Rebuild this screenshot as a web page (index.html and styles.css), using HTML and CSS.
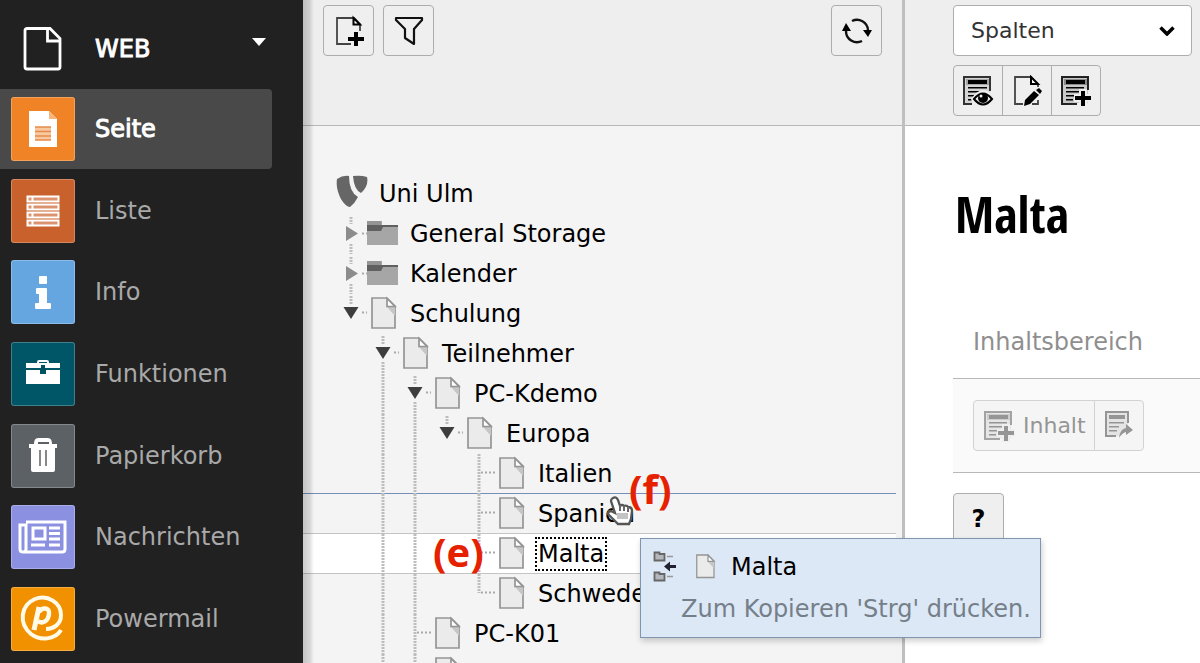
FILE: index.html
```html
<!DOCTYPE html>
<html lang="de">
<head>
<meta charset="utf-8">
<meta name="viewport" content="width=device-width, initial-scale=1">
<title>Malta – Seite</title>
<link rel="stylesheet" href="styles.css">
</head>
<body>
<svg class="sprite" aria-hidden="true">
  <symbol id="doc" viewBox="0 0 32 40">
    <path d="M5 4h15l8 8V34H5z" fill="#ebebeb" stroke="#959595" stroke-width="1.700"/>
    <path d="M19 12l9 10V12z" fill="#c6c6c6"/>
    <path d="M20 4.500v8h8z" fill="#fff" stroke="#959595" stroke-width="1.700"/>
  </symbol>
  <symbol id="folder" viewBox="0 0 32 40">
    <path d="M0 7h15v4h16v20H0z" fill="#a6a6a6"/>
    <path d="M0 11h31v2H16l-2 4H0z" fill="#606060"/>
    <path d="M0 7h14v4H0z" fill="#959595"/>
  </symbol>
  <symbol id="g-line" viewBox="0 0 32 40">
    <path d="M16 0v40" class="dots"/>
  </symbol>
  <symbol id="g-tee" viewBox="0 0 32 40">
    <path d="M16 0v40" class="dots"/><path d="M18 18.500h14" class="dots-h"/>
  </symbol>
  <symbol id="g-end" viewBox="0 0 32 40">
    <path d="M16 0v19" class="dots"/><path d="M18 18.500h14" class="dots-h"/>
  </symbol>
  <symbol id="g-closed" viewBox="0 0 32 40">
    <path d="M16 3v7M16 30v10" class="dots"/><path d="M27 19.500h6" class="dots-h"/>
    <path d="M11 12l12 7.500L11 27z" fill="#8c8c8c"/>
  </symbol>
  <symbol id="g-open" viewBox="0 0 32 40">
    <path d="M16 2v8" class="dots"/><path d="M27 18.500h6" class="dots-h"/>
    <path d="M8.500 13h15L16 25z" fill="#3d3d3d"/>
  </symbol>
  <symbol id="g-open-more" viewBox="0 0 32 40">
    <path d="M16 2v8M16 28v12" class="dots"/><path d="M27 18.500h6" class="dots-h"/>
    <path d="M8.500 13h15L16 25z" fill="#3d3d3d"/>
  </symbol>
  <symbol id="content-add" viewBox="0 0 32 32">
    <path d="M2 2h26v26H2z" fill="currentColor" fill-opacity=".16"/>
    <path d="M4 4h23v6H4z" fill="currentColor" fill-opacity=".3"/>
    <path d="M17 29H2V2h26v13" fill="none" stroke="currentColor" stroke-opacity=".85" stroke-width="2"/>
    <path d="M6 5h19v4H6zM6 12h18v1.500H6zM6 16h14v1.500H6zM6 20h9v1.500H6zM6 24h7v1.500H6z" fill="currentColor"/>
    <path d="M19 14h8v5h5v8h-5v5h-8v-5h-5v-8h5z" fill="#efefef"/>
    <path d="M21 16h4v5h6v4h-6v6h-4v-6h-6v-4h6z" fill="currentColor"/>
  </symbol>
</svg>

<div class="app">
  <nav class="sidebar" aria-label="Module">
    <button class="group" type="button">
      <svg class="group-icon" viewBox="0 0 40 46"><path d="M4 2.500h23l10 10V41a2 2 0 0 1-2 2H4a2 2 0 0 1-2-2V4.500a2 2 0 0 1 2-2zM24.500 3v12H37" fill="none" stroke="#fff" stroke-width="2.800"/></svg>
      <span class="group-label">WEB</span>
      <svg class="caret" viewBox="0 0 14 8"><path d="M0 0h14L7 8z" fill="#fff"/></svg>
    </button>
    <ul class="modules">
      <li><a class="module active" href="#seite"><span class="tile page"><svg viewBox="0 0 64 64"><path d="M18 14h20l8 8v28H18z" fill="#fff"/><path d="M38 14v8h8z" fill="#f6b57d"/><path d="M24 30h16v13H24z" fill="#f8c9a0"/><path d="M24 30h16M24 34.500h16M24 39h16M24 43h16" stroke="#e58a48" stroke-width="1.500"/></svg></span>Seite</a></li>
      <li><a class="module" href="#liste"><span class="tile list"><svg viewBox="0 0 64 64"><g fill="#dc9470" stroke="#fff" stroke-width="2"><path d="M16.500 17.500h31v5h-31zM16.500 25.500h31v5h-31zM16.500 33.500h31v5h-31zM16.500 41.500h31v5h-31z"/><path d="M21.500 17v30" stroke-dasharray="6 2"/></g></svg></span>Liste</a></li>
      <li><a class="module" href="#info"><span class="tile info"><svg viewBox="0 0 64 64"><path d="M29 16h6q1 0 1 1v6q0 1-1 1h-6q-1 0-1-1v-6q0-1 1-1zM26 28h9q1 0 1 1v14h3q1 0 1 1v4q0 1-1 1H25q-1 0-1-1v-4q0-1 1-1h3V34h-2q-1 0-1-1v-4q0-1 1-1z" fill="#fff"/></svg></span>Info</a></li>
      <li><a class="module" href="#funktionen"><span class="tile func"><svg viewBox="0 0 64 64"><path d="M15 21h11v-1q0-2 2-2h8q2 0 2 2v1h11v5H15zM28 21h8v-1h-8zM15 28h14v4h6v-4h14v14H15z" fill="#fff" fill-rule="evenodd"/><path d="M30 23h4v8h-4z" fill="#00505d"/></svg></span>Funktionen</a></li>
      <li><a class="module" href="#papierkorb"><span class="tile bin"><svg viewBox="0 0 64 64"><path d="M18 20h5q0-6 4-6h10q4 0 4 6h5v4h-2v22q0 2-2 2H22q-2 0-2-2V24h-2zM27 20h11v-2H27z" fill="#fff" fill-rule="evenodd"/><path d="M29 26v16M35 26v16" stroke="#888" stroke-width="2"/></svg></span>Papierkorb</a></li>
      <li><a class="module" href="#nachrichten"><span class="tile news"><svg viewBox="0 0 64 64"><g fill="none" stroke="#fff" stroke-width="3"><path d="M15 17h39v27q0 3-3 3H12q-3 0-3-3V20h6v24q0 3-3 3"/><path d="M22 23h12v11H22zM38 23h11M38 28.500h11M38 34h11M20 40h14M38 40h11"/></g></svg></span>Nachrichten</a></li>
      <li><a class="module" href="#powermail"><span class="tile mail"><svg viewBox="0 0 64 64"><g fill="none" stroke="#fffbe8" stroke-width="4"><path d="M50 43C44 53 29 54 20 47 7 36 10 18 24 12c13-5 26 4 26 16 0 9-7 14-15 14"/><path d="M28 20l-5 23" stroke-width="5"/><path d="M28 25c3-5 11-5 10 2-1 8-7 10-11 7" stroke-width="4.500"/></g></svg></span>Powermail</a></li>
    </ul>
  </nav>

  <section class="tree-panel" aria-label="Seitenbaum">
    <header class="bar tree-bar">
      <button class="btn square" type="button" aria-label="Neue Seite"><svg viewBox="0 0 32 32"><path d="M18 29H4V3h17l6 6v7" fill="none" stroke="#444" stroke-width="1.800"/><path d="M20.500 3v6.500H27z" fill="#fff" stroke="#000" stroke-width="2"/><path d="M21 17h4v5h6v4h-6v5h-4v-5h-6v-4h6z"/></svg></button>
      <button class="btn square" type="button" aria-label="Filter"><svg viewBox="0 0 32 32"><path d="M3 3h26v2l-8 9v15l-9-6v-9L3 5z" fill="none" stroke="#111" stroke-width="2.200" stroke-linejoin="round"/></svg></button>
      <button class="btn square push" type="button" aria-label="Aktualisieren"><svg viewBox="0 0 32 32"><path d="M11 6a11 11 0 0 1 16 9M21 26A11 11 0 0 1 5 16" fill="none" stroke="#111" stroke-width="2.400"/><path d="M22 15h9l-4 7zM1 16h9L5 8z"/></svg></button>
    </header>
    <ul class="tree">
      <li class="row root"><svg class="cell" viewBox="0 0 32 40"><path d="M1 5q6-4 12-3 0 16 9 21-3 6-8 10C7 32-1 17 1 5z" fill="#666"/><path d="M17 2q8-1 14 1 2 9-6 16-7-3-8-17z" fill="#666"/></svg><a class="name" href="#p1">Uni Ulm</a></li>
      <li class="row"><svg class="cell"><use href="#g-closed"/></svg><svg class="cell"><use href="#folder"/></svg><a class="name" href="#p2">General Storage</a></li>
      <li class="row"><svg class="cell"><use href="#g-closed"/></svg><svg class="cell"><use href="#folder"/></svg><a class="name" href="#p3">Kalender</a></li>
      <li class="row"><svg class="cell"><use href="#g-open"/></svg><svg class="cell"><use href="#doc"/></svg><a class="name" href="#p4">Schulung</a></li>
      <li class="row"><span class="cell"></span><svg class="cell"><use href="#g-open-more"/></svg><svg class="cell"><use href="#doc"/></svg><a class="name" href="#p5">Teilnehmer</a></li>
      <li class="row"><span class="cell"></span><svg class="cell"><use href="#g-line"/></svg><svg class="cell"><use href="#g-open-more"/></svg><svg class="cell"><use href="#doc"/></svg><a class="name" href="#p6">PC-Kdemo</a></li>
      <li class="row"><span class="cell"></span><svg class="cell"><use href="#g-line"/></svg><svg class="cell"><use href="#g-line"/></svg><svg class="cell"><use href="#g-open"/></svg><svg class="cell"><use href="#doc"/></svg><a class="name" href="#p7">Europa</a></li>
      <li class="row"><span class="cell"></span><svg class="cell"><use href="#g-line"/></svg><svg class="cell"><use href="#g-line"/></svg><span class="cell"></span><svg class="cell"><use href="#g-tee"/></svg><svg class="cell"><use href="#doc"/></svg><a class="name" href="#p8">Italien</a></li>
      <li class="row drop"><span class="cell"></span><svg class="cell"><use href="#g-line"/></svg><svg class="cell"><use href="#g-line"/></svg><span class="cell"></span><svg class="cell"><use href="#g-tee"/></svg><svg class="cell"><use href="#doc"/></svg><a class="name" href="#p9">Spanien</a></li>
      <li class="row selected"><span class="cell"></span><svg class="cell"><use href="#g-line"/></svg><svg class="cell"><use href="#g-line"/></svg><span class="cell"></span><svg class="cell"><use href="#g-tee"/></svg><svg class="cell"><use href="#doc"/></svg><a class="name" href="#p10">Malta</a></li>
      <li class="row"><span class="cell"></span><svg class="cell"><use href="#g-line"/></svg><svg class="cell"><use href="#g-line"/></svg><span class="cell"></span><svg class="cell"><use href="#g-end"/></svg><svg class="cell"><use href="#doc"/></svg><a class="name" href="#p11">Schweden</a></li>
      <li class="row"><span class="cell"></span><svg class="cell"><use href="#g-line"/></svg><svg class="cell"><use href="#g-tee"/></svg><svg class="cell"><use href="#doc"/></svg><a class="name" href="#p12">PC-K01</a></li>
      <li class="row"><span class="cell"></span><svg class="cell"><use href="#g-line"/></svg><svg class="cell"><use href="#g-tee"/></svg><svg class="cell"><use href="#doc"/></svg></li>
    </ul>
  </section>

  <main class="content">
    <header class="bar content-bar">
      <div class="select-wrap">
        <select class="select" aria-label="Ansicht"><option>Spalten</option></select>
        <svg class="chevron" viewBox="0 0 16 10"><path d="M1.500 1.500L8 8l6.500-6.500" fill="none" stroke="#000" stroke-width="3.500"/></svg>
      </div>
      <div class="btn-group">
        <button class="btn square" type="button" aria-label="Ansehen"><svg viewBox="0 0 32 32"><path d="M2 2h26v26H2z" fill="#d4d4d4"/><path d="M4 4h23v6H4z" fill="#a5a5a5"/><path d="M10 29H2V2h26v14" fill="none" stroke="#333" stroke-width="2"/><path d="M6 5h19v4H6zM6 12h19v1.500H6zM6 16h12v1.500H6zM6 20h6v1.500H6zM6 24h4v1.500H6z"/><path d="M9 24q12-17 23-2v8H11z" fill="#eee"/><path d="M12 24q9-11 18 0-9 11-18 0z" fill="#eee" stroke="#000" stroke-width="2"/><circle cx="21" cy="23" r="5"/><circle cx="19" cy="21" r="1.500" fill="#eee"/></svg></button>
        <button class="btn square" type="button" aria-label="Seite bearbeiten"><svg viewBox="0 0 32 32"><path d="M12 29H4V2h16l7 7v3M27 25v4h-6" fill="none" stroke="#444" stroke-width="1.800"/><path d="M20 2v7h7z" fill="#fff" stroke="#000" stroke-width="2"/><path d="M13 31l1-6 9-9 5 4-9 9zM25 15l3-2 3 3-2 3z"/></svg></button>
        <button class="btn square" type="button" aria-label="Inhalt anlegen"><svg viewBox="0 0 32 32"><use href="#content-add"/></svg></button>
      </div>
    </header>
    <div class="body">
      <h1 class="title">Malta</h1>
      <h2 class="column-title">Inhaltsbereich</h2>
      <div class="column">
        <div class="btn-group muted">
          <button class="btn wide" type="button"><svg viewBox="0 0 32 32"><use href="#content-add"/></svg>Inhalt</button>
          <button class="btn square" type="button" aria-label="Einfügen"><svg viewBox="0 0 32 32"><path d="M3 2h22v13l-8 11H3z" fill="#e4e4e4"/><path d="M13 26H3V2h22v11" fill="none" stroke="currentColor" stroke-width="2"/><path d="M6 5h16v4H6zM6 12h15v1.500H6zM6 16h10v1.500H6zM6 20h8v1.500H6z" fill="currentColor"/><path d="M16 28q1-9 7-10v-4l7 6-7 5v-3q-4 1-7 6z" fill="currentColor"/></svg></button>
        </div>
      </div>
      <button class="btn square help" type="button">?</button>
    </div>
  </main>
</div>

<svg class="cursor" viewBox="0 0 28 30" aria-hidden="true"><path d="M7 2q3-2 5 2l2 6q2-2 4 0 3-1 4 1 4 0 4 4l-1 8-2 5H12l-4-4-6-6q0-3 3-3l4 2-4-12q0-2 2-3z" fill="#fff" stroke="#555" stroke-width="2.300"/><path d="M14 9v6M18 10v5M22 11v5" stroke="#666" stroke-width="2"/><path d="M11 17h11v6H11z" fill="#c4c4c4"/></svg>
<span class="mark mark-e">(e)</span>
<span class="mark mark-f">(f)</span>
<div class="drag-tip" role="tooltip">
  <div class="tip-head">
    <svg class="tip-move" viewBox="0 0 24 32"><path d="M1.500 3V1.500h5V3h5v6.500h-10zM1.500 23v-1.500h5V23h5v6.500h-10z" fill="#b4b8bc" stroke="#666" stroke-width="1.800"/><path d="M14 5.500h6M14 25.500h6" stroke="#999" stroke-width="1.500"/><path d="M11 15.500l6-5V14h6v3h-6v3.500z" fill="#223"/></svg>
    <svg class="tip-doc" viewBox="0 0 32 40"><use href="#doc"/></svg>
    <span>Malta</span>
  </div>
  <div class="tip-hint">Zum Kopieren 'Strg' drücken.</div>
</div>
</body>
</html>
```
FILE: styles.css
```css
* { box-sizing: border-box; }

body {
  margin: 0;
  overflow: hidden;
  font: 24px/32px Verdana, "DejaVu Sans", sans-serif;
  color: #000;
}

a { color: inherit; text-decoration: none; }
ul { list-style: none; margin: 0; padding: 0; }
button, select { font: inherit; color: inherit; }
.sprite { position: absolute; width: 0; height: 0; }
.dots { fill: none; stroke: #bdbdbd; stroke-width: 3; stroke-dasharray: 2 1; }
.dots-h { fill: none; stroke: #aaa; stroke-width: 2; stroke-dasharray: 2 2; }

.app {
  display: grid;
  grid-template-columns: 303px minmax(0, 602fr) minmax(0, 295fr);
  height: 100vh;
}

/* Module menu */
.sidebar {
  display: flex;
  flex-direction: column;
  background: #212121;
  color: #a9a9a9;
  overflow: hidden;
}
.group {
  display: flex;
  align-items: center;
  height: 89px;
  flex: none;
  padding: 8px 37px 0 23px;
  border: 0;
  background: none;
  color: #fff;
  text-align: left;
}
.group-icon { width: 40px; height: 46px; margin-right: 32px; }
.group-label { flex: 1; -webkit-text-stroke: 1px; }
.caret { width: 14px; height: 8px; margin-bottom: 14px; }
.modules {
  display: flex;
  flex-direction: column;
  justify-content: space-between;
  flex: 1;
  max-height: 570px;
}
.module {
  display: flex;
  align-items: center;
  gap: 20px;
  height: 80px;
  margin-right: 31px;
  padding-left: 11px;
  border-radius: 0 4px 4px 0;
}
.module.active { background: #494949; color: #fff; -webkit-text-stroke: 1px; }
.tile {
  width: 64px;
  height: 64px;
  border-radius: 3px;
  overflow: hidden;
  box-shadow: inset 0 0 0 1px rgba(255, 255, 255, .25);
}
.tile svg { display: block; }
.page { background: #ef8326; }
.list { background: #c9612d; }
.info { background: #65a5e0; }
.func { background: #005566; }
.bin { background: #5b6165; }
.news { background: #8b91e0; }
.mail { background: #f29100; }

/* Shared toolbar and buttons */
.bar {
  height: 126px;
  background: #eee;
  border-bottom: 1px solid #b8b8b8;
  flex: none;
}
.btn {
  display: inline-flex;
  align-items: center;
  justify-content: center;
  height: 51px;
  padding: 0;
  border: 1px solid #adadad;
  border-radius: 4px;
  background: #efefef;
}
.btn svg { width: 32px; height: 32px; }
.square { width: 51px; }
.btn-group { display: flex; }
.btn-group .square { width: 50px; }
.btn-group .btn + .btn { margin-left: -1px; border-radius: 0; }
.btn-group .btn:first-child { border-radius: 4px 0 0 4px; }
.btn-group .btn:last-child { border-radius: 0 4px 4px 0; }

/* Page tree */
.tree-panel {
  display: flex;
  flex-direction: column;
  position: relative;
  overflow: hidden;
  background: #f4f4f4;
  border-right: 3px solid #bfbfbf;
}
.tree-panel::after {
  content: "";
  position: absolute;
  inset: 0 auto 0 0;
  width: 11px;
  background: linear-gradient(90deg, rgba(0, 0, 0, .2), rgba(0, 0, 0, .13) 60%, rgba(0, 0, 0, 0));
}
.tree-bar { display: flex; gap: 9px; padding: 5px 20px 0; }
.push { margin-left: auto; }
.tree { padding: 48px 6px 0 0; }
.row { display: flex; align-items: center; height: 40px; padding-left: 32px; }
.cell { width: 32px; height: 40px; flex: none; }
.name { margin-left: 9px; padding: 0 2px; white-space: nowrap; }
.root .cell { margin-left: 1px; }
.drop { box-shadow: 0 -1px #7590b8; }
.selected { background: #fff; box-shadow: 0 -1px #c4c4c4, inset 0 -1px #c4c4c4; }
.selected .name { outline: 2px dotted #000; outline-offset: -1px; }

/* Content */
.content { background: #fff; min-width: 0; overflow: hidden; }
.content-bar { padding: 5px 8px 0 48px; }
.select-wrap { position: relative; margin-bottom: 9px; }
.select {
  display: block;
  appearance: none;
  width: 100%;
  height: 51px;
  padding: 0 48px 0 17px;
  border: 1px solid #adadad;
  border-radius: 4px;
  background: #fff;
  color: #333;
  font-size: 22px;
}
.chevron { position: absolute; right: 17px; top: 21px; width: 16px; height: 10px; pointer-events: none; }
.body { padding: 56px 0 0 48px; }
.title {
  margin: 0 0 80px;
  padding-left: 2px;
  font: bold 50px/64px "Open Sans Condensed", "DejaVu Sans Condensed", sans-serif;
}
.column-title { margin: 0; padding: 0 20px 20px; font-size: 24px; line-height: 32px; font-weight: 400; color: #8f8f8f; }
.column {
  margin-bottom: 20px;
  padding: 21px 20px;
  border: solid #b8b8b8;
  border-width: 1px 0;
  background: #fafafa;
}
.muted .btn { border-color: #d2d2d2; background: #f5f5f5; color: #959595; font-size: 22px; }
.wide { gap: 8px; padding: 0 8px 0 9px; }
.help { font-weight: 700; }

/* Overlays */
.cursor { position: absolute; left: 606px; top: 496px; width: 28px; height: 30px; }
.mark { position: absolute; font: bold 40px/48px "Open Sans", sans-serif; color: #e62100; }
.mark-e { left: 433px; top: 528px; }
.mark-f { left: 629px; top: 465px; }
.drag-tip {
  position: absolute;
  left: 640px;
  top: 538px;
  padding: 11px 9px 12px 12px;
  border: 1px solid #8096b0;
  background: #dce8f5;
  box-shadow: 1px 3px 6px rgba(0, 0, 0, .2);
  white-space: nowrap;
}
.tip-head { display: flex; align-items: center; height: 33px; margin-bottom: 10px; }
.tip-move { width: 24px; height: 32px; margin-right: 16px; }
.tip-doc { width: 24px; height: 30px; margin-right: 14px; }
.tip-hint { padding-left: 28px; color: #757f8a; }
```
